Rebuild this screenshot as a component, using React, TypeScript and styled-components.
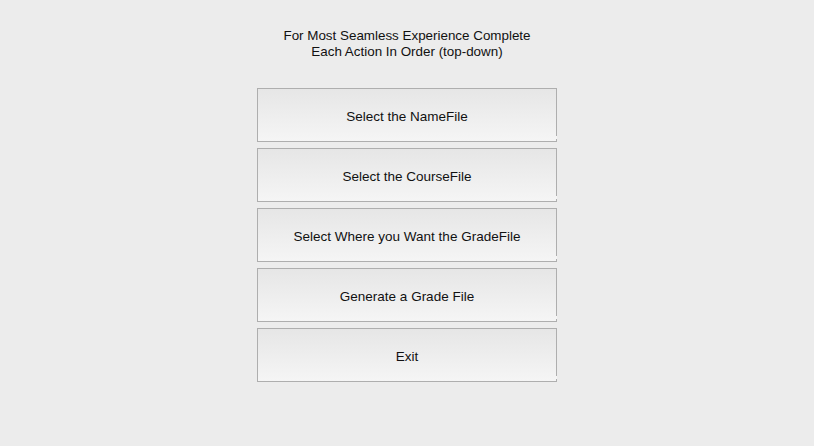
import React from "react";
import styled, { createGlobalStyle } from "styled-components";

const Global = createGlobalStyle`
  html, body { margin: 0; padding: 0; background: #ececec; }
  body { font-family: "Liberation Sans", Arial, sans-serif; }
`;

const Page = styled.div`
  width: 814px;
  height: 446px;
  display: flex;
  flex-direction: column;
  align-items: center;
  background: #ececec;
  box-sizing: border-box;
  padding-top: 28px;
`;

const Title = styled.div`
  font-size: 13.4px;
  line-height: 16px;
  color: #111;
  text-align: center;
  margin-bottom: 28px;
`;

const List = styled.div`
  display: flex;
  flex-direction: column;
  gap: 6px;
`;

const Button = styled.button`
  position: relative;
  width: 300px;
  height: 54px;
  box-sizing: border-box;
  border: 1px solid #aeaeae;
  background: linear-gradient(to bottom, #e6e6e6 0%, #f5f5f5 100%);
  font-family: "Liberation Sans", Arial, sans-serif;
  font-size: 13.5px;
  color: #111;
  padding: 2px 0 0 0;
  margin: 0;
  cursor: default;
  &::after {
    content: "";
    position: absolute;
    right: -1px;
    bottom: 2px;
    width: 1px;
    height: 3px;
    background: #f5f5f5;
  }
`;

const items = [
  "Select the NameFile",
  "Select the CourseFile",
  "Select Where you Want the GradeFile",
  "Generate a Grade File",
  "Exit",
];

export default function App() {
  return (
    <>
      <Global />
      <Page>
        <Title>
          For Most Seamless Experience Complete
          <br />
          Each Action In Order (top-down)
        </Title>
        <List>
          {items.map((t) => (
            <Button key={t}>{t}</Button>
          ))}
        </List>
      </Page>
    </>
  );
}
